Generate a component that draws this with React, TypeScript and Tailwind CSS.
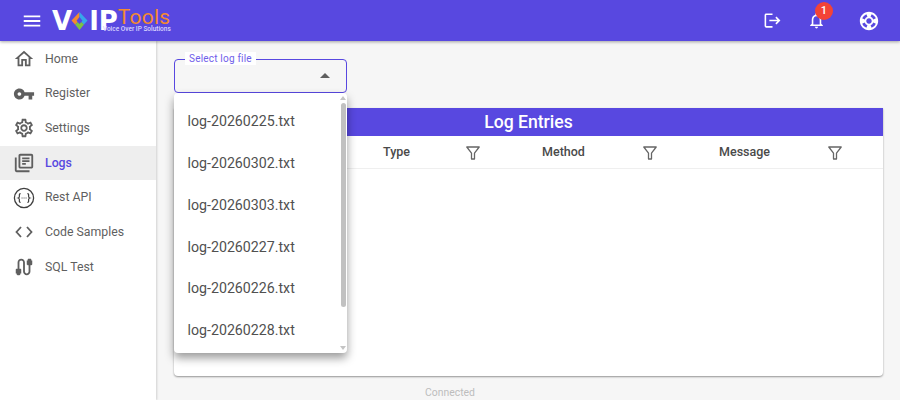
import {
  MdMenu,
  MdLogout,
  MdOutlineNotifications,
  MdSupport,
  MdOutlineHome,
  MdVpnKey,
  MdOutlineSettings,
  MdOutlineLibraryBooks,
  MdOutlineCable,
  MdArrowDropUp,
} from "react-icons/md";

function RestIcon() {
  return (
    <svg width="22" height="22" viewBox="0 0 22 22" fill="none" stroke="#3f3f3f">
      <circle cx="11" cy="11" r="9.6" strokeWidth="1.3" />
      <path d="M7.6 6.6c-1.6 0-1.2 1.2-1.2 2.6 0 1-.4 1.6-1.1 1.8.7.2 1.1.8 1.1 1.8 0 1.4-.4 2.6 1.2 2.6" strokeWidth="1.2" />
      <path d="M14.4 6.6c1.6 0 1.2 1.2 1.2 2.6 0 1 .4 1.6 1.1 1.8-.7.2-1.1.8-1.1 1.8 0 1.4.4 2.6-1.2 2.6" strokeWidth="1.2" />
      <path d="M8.6 11h.9M10.6 11h.9M12.6 11h.9" strokeWidth="1.2" />
    </svg>
  );
}

function ChevronsIcon() {
  return (
    <svg width="18" height="12" viewBox="0 0 18 12" fill="none" stroke="#5f5f5f" strokeWidth="1.8">
      <path d="M6 1 1.5 6 6 11" />
      <path d="M12 1l4.500 5L12 11" />
    </svg>
  );
}

function FilterIcon() {
  return (
    <svg width="14" height="14" viewBox="0 0 14 14" fill="none" stroke="#666" strokeWidth="1.3" strokeLinejoin="round">
      <path d="M.8 1h12.400L8.500 7.200v5.800H5.500V7.200z" />
    </svg>
  );
}

function LogoMark() {
  return (
    <svg width="17" height="20" viewBox="0 0 17 20" className="-mx-[1px] shrink-0">
      <path d="M8.500 1 0.500 9.500 4 13.500l4.500-4z" fill="#f58a2e" />
      <path d="M8.500 1l8 8.500-3.500 4-4.500-4z" fill="#37a6ea" />
      <path d="M4 13.500l4.500-4 4.500 4-4.500 5.500z" fill="#7cc243" />
      <path d="M8.500 6 5.500 9.800 8.500 13l3-3.200z" fill="#5848e0" />
    </svg>
  );
}

function Logo() {
  return (
    <div className="flex h-[41px] items-center pt-[1px]">
      <span className="font-['DejaVu_Sans',sans-serif] text-[26px] leading-none font-bold text-white">V</span>
      <LogoMark />
      <span className="ml-[2px] font-['DejaVu_Sans',sans-serif] text-[26px] leading-none font-bold text-white">IP</span>
      <div className="flex flex-col">
        <span className="text-[21px] leading-[17px] tracking-[0.2px] text-[#f58a2e]">Tools</span>
        <span className="-ml-[15px] text-[6.500px] leading-[7px] font-medium text-[#d9d4ff] whitespace-nowrap">Voice Over IP Solutions</span>
      </div>
    </div>
  );
}

const navItems = [
  { label: "Home", icon: <MdOutlineHome size={24} color="#5f5f5f" /> },
  { label: "Register", icon: <MdVpnKey size={22} color="#5f5f5f" /> },
  { label: "Settings", icon: <MdOutlineSettings size={22} color="#5f5f5f" /> },
  { label: "Logs", icon: <MdOutlineLibraryBooks size={22} color="#5f5f5f" />, active: true },
  { label: "Rest API", icon: <RestIcon /> },
  { label: "Code Samples", icon: <ChevronsIcon /> },
  { label: "SQL Test", icon: <MdOutlineCable size={22} color="#5f5f5f" /> },
];

const logFiles = [
  "log-20260225.txt",
  "log-20260302.txt",
  "log-20260303.txt",
  "log-20260227.txt",
  "log-20260226.txt",
  "log-20260228.txt",
];

const columns = [
  { label: "Type", pad: "pr-[62px]" },
  { label: "Method", pad: "pr-[62px]" },
  { label: "Message", pad: "pr-[41px]" },
];

export default function App() {
  return (
    <div className="flex h-[400px] w-[900px] flex-col overflow-hidden bg-[#f6f6f6] font-['Roboto',sans-serif]">
      {/* Top bar */}
      <header className="z-20 flex h-[41px] shrink-0 items-center bg-[#5848e0] pr-[20px] pl-[21px] shadow-[0_1px_3px_rgba(0,0,0,0.35)]">
        <MdMenu size={22} color="#fff" />
        <div className="ml-[9px]">
          <Logo />
        </div>
        <div className="ml-auto flex items-center">
          <MdLogout size={19} color="#fff" />
          <div className="relative ml-[25px]">
            <MdOutlineNotifications size={19} color="#fff" />
            <span className="absolute -top-[9px] left-[8px] flex h-[18px] w-[18px] items-center justify-center rounded-full bg-[#f44336] text-[11px] font-medium text-white">1</span>
          </div>
          <MdSupport size={22} color="#fff" className="ml-[32px]" />
        </div>
      </header>

      <div className="flex min-h-0 flex-1">
        {/* Sidebar */}
        <nav className="z-10 flex w-[156px] shrink-0 flex-col bg-white pt-[0.600px] shadow-[1px_0_2px_rgba(0,0,0,0.15)]">
          {navItems.map((item) => (
            <div
              key={item.label}
              className={`flex h-[34.670px] items-center gap-[10px] pl-[13px] text-[12.300px] ${item.active ? "bg-[#eeeeee] font-medium text-[#5848e0]" : "text-[#5f5f5f]"}`}
            >
              <span className="flex w-[22px] items-center justify-center">{item.icon}</span>
              {item.label}
            </div>
          ))}
        </nav>

        {/* Main area */}
        <main className="flex min-w-0 flex-1 flex-col">
          <div className="flex-1 pt-[18px] pr-[17px] pl-[18px]">
            <div className="relative h-[34px] w-[173px] rounded-[4px] border-[1.500px] border-[#5848e0]">
              <span className="absolute -top-[8px] left-[10px] bg-white px-[4px] text-[10px] leading-[13px] tracking-[0.2px] text-[#6f60ea]">Select log file</span>
              <MdArrowDropUp size={24} color="#5f5f5f" className="absolute top-[4px] right-[9px]" />

              {/* Open dropdown */}
              <div className="absolute top-[33px] -left-[1.500px] z-30 flex h-[260px] w-[173px] rounded-[4px] bg-white shadow-[0_5px_10px_rgba(0,0,0,0.4)]">
                <ul className="flex-1 pt-[8px]">
                  {logFiles.map((file) => (
                    <li key={file} className="flex h-[41.800px] items-center pl-[14px] text-[14.200px] text-[#505050]">{file}</li>
                  ))}
                </ul>
                <div className="flex w-[7px] flex-col items-center pt-[3px]">
                  <div className="h-0 w-0 border-x-[3px] border-b-[4px] border-x-transparent border-b-[#c4c4c4]" />
                  <div className="mt-[3px] h-[204px] w-[5px] rounded-full bg-[#c1c1c1]" />
                  <div className="mt-auto mb-[3px] h-0 w-0 border-x-[3px] border-t-[4px] border-x-transparent border-t-[#c4c4c4]" />
                </div>
              </div>
            </div>

            {/* Log entries card */}
            <section className="mt-[15px] flex h-[268px] flex-col overflow-hidden rounded-b-[4px] bg-white shadow-[0_1px_2px_rgba(0,0,0,0.4)]">
              <h2 className="flex h-[28px] shrink-0 items-center justify-center bg-[#5848e0] pt-[1px] text-[17.600px] font-medium text-white">Log Entries</h2>
              <div className="grid h-[33px] grid-cols-[209px_159px_177px_1fr] items-center border-b border-[#efefef] text-[12.500px] font-medium text-[#4a4a4a]">
                <div />
                {columns.map((col) => (
                  <div key={col.label} className={`flex items-center justify-between pt-[1px] ${col.pad}`}>
                    {col.label}
                    <FilterIcon />
                  </div>
                ))}
              </div>
            </section>
          </div>
          <footer className="h-[24px] shrink-0 pt-[11px] pr-[156px] text-center text-[10.400px] leading-[12px] text-[#bdbdbd]">Connected</footer>
        </main>
      </div>
    </div>
  );
}
